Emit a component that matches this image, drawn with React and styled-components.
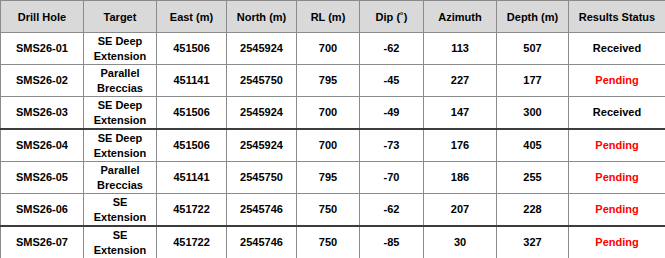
import React from "react";
import styled, { createGlobalStyle } from "styled-components";

const GlobalStyle = createGlobalStyle`
  html, body {
    margin: 0;
    padding: 0;
    background: #fff;
  }
`;

const Table = styled.table`
  width: 665px;
  border-collapse: collapse;
  table-layout: fixed;
  font-family: "Liberation Sans", Arial, sans-serif;
  font-size: 11px;
  font-weight: bold;
  color: #000;
`;

const HeadCell = styled.th`
  height: 31px;
  padding: 0;
  background: #d9d9d9;
  border: 1px solid #8a8a8a;
  text-align: center;
  vertical-align: middle;
  font-weight: bold;
`;

const Row = styled.tr`
  td {
    border-top: ${(p) => (p.$divider ? "2px solid #3c3c3c" : "1px solid #8a8a8a")};
  }
`;

const Cell = styled.td`
  height: 31px;
  padding: 0 2px;
  border: 1px solid #8a8a8a;
  text-align: center;
  vertical-align: middle;
  line-height: 15px;
  color: ${(p) => (p.$pending ? "#ff0000" : "#000")};
`;

const columns = [
  { label: "Drill Hole", width: 83 },
  { label: "Target", width: 73 },
  { label: "East (m)", width: 70 },
  { label: "North (m)", width: 70 },
  { label: "RL (m)", width: 63 },
  { label: "Dip (˚)", width: 64 },
  { label: "Azimuth", width: 73 },
  { label: "Depth (m)", width: 72 },
  { label: "Results Status", width: 97 },
];

const holes = [
  ["SMS26-01", ["SE Deep", "Extension"], 451506, 2545924, 700, -62, 113, 507, "Received"],
  ["SMS26-02", ["Parallel", "Breccias"], 451141, 2545750, 795, -45, 227, 177, "Pending"],
  ["SMS26-03", ["SE Deep", "Extension"], 451506, 2545924, 700, -49, 147, 300, "Received"],
  ["SMS26-04", ["SE Deep", "Extension"], 451506, 2545924, 700, -73, 176, 405, "Pending", true],
  ["SMS26-05", ["Parallel", "Breccias"], 451141, 2545750, 795, -70, 186, 255, "Pending"],
  ["SMS26-06", ["SE", "Extension"], 451722, 2545746, 750, -62, 207, 228, "Pending"],
  ["SMS26-07", ["SE", "Extension"], 451722, 2545746, 750, -85, 30, 327, "Pending", true],
];

const App = () => {
  return (
    <>
      <GlobalStyle />
      <Table>
        <colgroup>
          {columns.map((c) => (
            <col key={c.label} style={{ width: c.width }} />
          ))}
        </colgroup>
        <thead>
          <tr>
            {columns.map((c) => (
              <HeadCell key={c.label}>{c.label}</HeadCell>
            ))}
          </tr>
        </thead>
        <tbody>
          {holes.map(([id, target, east, north, rl, dip, az, depth, status, divider]) => (
            <Row key={id} $divider={divider}>
              <Cell>{id}</Cell>
              <Cell>
                {target[0]}
                <br />
                {target[1]}
              </Cell>
              <Cell>{east}</Cell>
              <Cell>{north}</Cell>
              <Cell>{rl}</Cell>
              <Cell>{dip}</Cell>
              <Cell>{az}</Cell>
              <Cell>{depth}</Cell>
              <Cell $pending={status === "Pending"}>{status}</Cell>
            </Row>
          ))}
        </tbody>
      </Table>
    </>
  );
};

export default App;
